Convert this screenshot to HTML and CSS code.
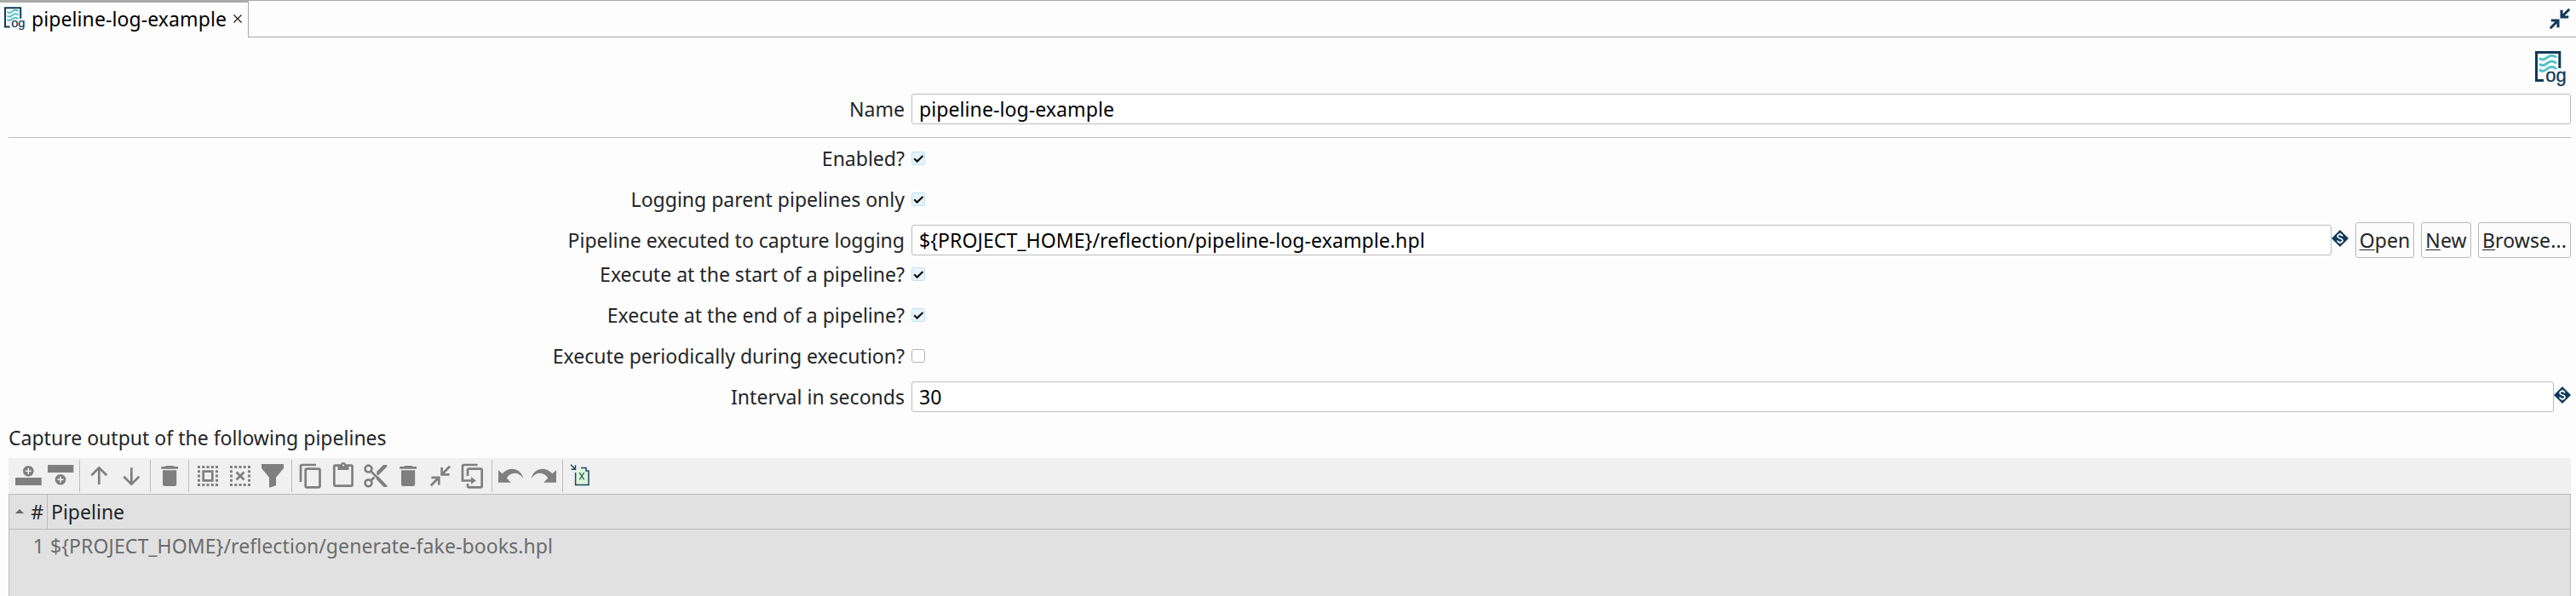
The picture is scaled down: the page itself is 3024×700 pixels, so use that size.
FILE: index.html
```html
<!DOCTYPE html>
<html lang="en">
<head>
<meta charset="utf-8">
<title>pipeline-log-example</title>
<link rel="stylesheet" href="styles.css">
</head>
<body>
<svg class="defs" width="0" height="0">
  <symbol id="log" viewBox="0 0 36 41" overflow="visible">
    <path d="M10 34.600H1.500V1.400H28.800V20" fill="none" stroke="#0e3a5a" stroke-width="3"/>
    <g fill="none" stroke="#4fc3c7" stroke-width="2.900">
      <path d="M5 8.200c3 3 6 2 9-.6s7-3.600 11-.2"/>
      <path d="M5 15c3 3 6 2 9-.6s7-3.600 11-.2"/>
      <path d="M5 21.600c3 3 6 2 9-.6s7-3.600 11-.2"/>
    </g>
    <text x="12.200" y="35.800" class="log-text">og</text>
  </symbol>
  <symbol id="shrink" viewBox="0 0 24 24">
    <path d="M23.200.8L14.500 9.500M14 1.800V10H22.200M.8 23.200L9.500 14.500M1.800 14H10V22.200" fill="none" stroke="currentColor" stroke-width="3"/>
  </symbol>
  <symbol id="var" viewBox="0 0 20 20">
    <path d="M10 0L20 10L10 20L0 10Z" fill="#0e3a5a"/>
    <path d="M12.900 7.500C12.500 6 11.500 5.400 10 5.400C8.200 5.400 7.100 6.200 7.100 7.500C7.100 10.600 13 9.200 13 12.400C13 13.800 11.900 14.600 10 14.600C8.300 14.600 7.200 13.900 6.900 12.400M10 3.800V5.400M10 14.600V16.200" fill="none" stroke="#fff" stroke-width="1.600"/>
  </symbol>
  <symbol id="trash" viewBox="0 0 38 42">
    <path d="M9.300 10H14L15 8.900H23.500L24.500 10H29V12.700H9.300ZM11 14.200H27.200V30.500Q27.200 33 24.700 33H13.500Q11 33 11 30.500Z"/>
  </symbol>
  <symbol id="dots" viewBox="0 0 38 42">
    <path d="M7 10.500H31M7 31.500H31" stroke="currentColor" stroke-width="3" stroke-dasharray="3 2.250" fill="none"/>
    <path d="M8.500 14.250V30M29.500 14.250V30" stroke="currentColor" stroke-width="3" stroke-dasharray="3 2.250" fill="none"/>
  </symbol>
  <symbol id="undo" viewBox="0 0 38 42">
    <path d="M4 14.300L8.600 18.300C16 9.800 30 10.500 33.300 24C27.500 15 18 16.500 13.800 23.500L18.800 28.700H4Z"/>
  </symbol>
</svg>

<header class="tabs">
  <div class="tab">
    <svg class="tab-icon"><use href="#log"/></svg>
    <span class="tab-title">pipeline-log-example</span>
    <svg class="close" viewBox="0 0 10 10"><path d="M.5.5L9.500 9.500M9.500.5L.5 9.500"/></svg>
  </div>
  <div class="tab-rest"><svg class="minimize"><use href="#shrink"/></svg></div>
</header>

<main class="editor">
  <div class="logo-row"><svg class="logo"><use href="#log"/></svg></div>
  <div class="row name-row"><label>Name</label><div class="input">pipeline-log-example</div></div>
  <div class="row"><label>Enabled?</label><span class="check on"><svg viewBox="0 0 16 16"><path d="M3.200 8.200L6.600 11.600L13.400 5"/></svg></span></div>
  <div class="row"><label>Logging parent pipelines only</label><span class="check on"><svg viewBox="0 0 16 16"><path d="M3.200 8.200L6.600 11.600L13.400 5"/></svg></span></div>
  <div class="row">
    <label>Pipeline executed to capture logging</label>
    <div class="input">${PROJECT_HOME}/reflection/pipeline-log-example.hpl</div>
    <svg class="var"><use href="#var"/></svg>
    <div class="buttons">
      <div class="button open"><span><u>O</u>pen</span></div>
      <div class="button new"><span><u>N</u>ew</span></div>
      <div class="button browse"><span><u>B</u>rowse...</span></div>
    </div>
  </div>
  <div class="row tight"><label>Execute at the start of a pipeline?</label><span class="check on"><svg viewBox="0 0 16 16"><path d="M3.200 8.200L6.600 11.600L13.400 5"/></svg></span></div>
  <div class="row"><label>Execute at the end of a pipeline?</label><span class="check on"><svg viewBox="0 0 16 16"><path d="M3.200 8.200L6.600 11.600L13.400 5"/></svg></span></div>
  <div class="row"><label>Execute periodically during execution?</label><span class="check"></span></div>
  <div class="row"><label>Interval in seconds</label><div class="input">30</div><svg class="var"><use href="#var"/></svg></div>
  <div class="caption">Capture output of the following pipelines</div>

  <div class="toolbar">
    <svg class="tool" viewBox="0 0 38 42"><path d="M4 23H34.700V32H4Z"/><circle cx="19.300" cy="15.300" r="6.300"/><path class="plus" d="M19.300 11.800V18.800M15.800 15.300H22.800"/></svg>
    <svg class="tool" viewBox="0 0 38 42"><path d="M4 8H34.300V17H4Z"/><circle cx="19" cy="25.200" r="6.300"/><path class="plus" d="M19 21.700V28.700M15.500 25.200H22.500"/></svg>
    <i class="sep"></i>
    <svg class="tool line" viewBox="0 0 38 42"><path d="M19.300 31V11M10.300 20.300L19.300 11.300L28.300 20.300"/></svg>
    <svg class="tool line" viewBox="0 0 38 42"><path d="M19.300 11.300V31M10.300 21.700L19.300 30.700L28.300 21.700"/></svg>
    <i class="sep"></i>
    <svg class="tool"><use href="#trash"/></svg>
    <i class="sep"></i>
    <svg class="tool line" viewBox="0 0 38 42"><use href="#dots" width="38" height="42"/><path d="M13.700 15.700H24.300V26.300H13.700Z"/></svg>
    <svg class="tool line" viewBox="0 0 38 42"><use href="#dots" width="38" height="42"/><path d="M14.500 16.500L23.500 25.500M23.500 16.500L14.500 25.500"/></svg>
    <svg class="tool" viewBox="0 0 38 42"><path d="M6 7H32V12L23 22.700V32.300L15 34.700V22.700L6 12Z"/></svg>
    <i class="sep"></i>
    <svg class="tool line" viewBox="0 0 38 42"><path d="M25 8H8.500Q7 8 7 9.500V28"/><rect x="12.700" y="12.700" width="16.800" height="21.600" rx="1.500"/></svg>
    <svg class="tool line" viewBox="0 0 38 42"><rect x="8.300" y="8.600" width="21.300" height="24" rx="1.500"/><path class="fill" d="M12.500 8H16A3 3 0 0 1 22 8H25.500V14H12.500Z"/><circle class="hole" cx="19" cy="8.500" r="1.100"/></svg>
    <svg class="tool line" viewBox="0 0 38 42"><circle cx="10.500" cy="12.600" r="3.900"/><circle cx="10.500" cy="29.300" r="3.900"/><path d="M13.300 15.400L31.500 33.200M13.300 26.500L17.500 22.500M20.800 19.500L31.500 9"/><path class="fill" d="M28 7.900H33L22 19L19.800 16.600ZM19.500 24.500L22.500 22L33 34H28.500Z"/></svg>
    <svg class="tool"><use href="#trash"/></svg>
    <svg class="tool line" viewBox="0 0 38 42"><path d="M30 9.800L21.500 18.500M20.600 11V19.400H29.700M7.800 32.200L16.500 23.500M8.500 22.900H17.300V31.600"/></svg>
    <svg class="tool line" viewBox="0 0 38 42"><path d="M24.500 8H8.500Q7 8 7 9.500V26.500H18M13 21V14.200Q13 12.700 14.500 12.700H28.200Q29.700 12.700 29.700 14.200V32.800Q29.700 34.300 28.200 34.300H14.500Q13 34.300 13 32.800V30"/><path class="fill" d="M17 22L22.800 26.400L17 30.800Z"/></svg>
    <i class="sep"></i>
    <svg class="tool"><use href="#undo"/></svg>
    <svg class="tool flip"><use href="#undo"/></svg>
    <i class="sep"></i>
    <svg class="tool excel" viewBox="0 0 38 42"><path class="page" d="M11.600 15.500V31.400H27V15L23.500 11.500H16.500L13.500 14"/><path class="edge" d="M11.600 17V31.400H27V15H24V11.500H18M6 7.700L11 12.700M11.500 8.300V13.200H6.600"/><path class="mark" d="M16.300 17L21.700 25.500M21.700 17L16.300 25.500"/></svg>
  </div>

  <div class="table">
    <div class="thead"><div class="num"><svg class="sort" viewBox="0 0 10 5"><path d="M0 5L5 0L10 5Z"/></svg><span>#</span></div><div class="cell">Pipeline</div></div>
    <div class="trow"><div class="num">1</div><div class="cell">${PROJECT_HOME}/reflection/generate-fake-books.hpl</div></div>
  </div>
</main>
</body>
</html>
```
FILE: styles.css
```css
* { box-sizing: border-box; }
body {
  margin: 0;
  height: 700px;
  overflow: hidden;
  display: flex;
  flex-direction: column;
  background: #fdfdfd;
  color: #232629;
  font-family: "Noto Sans", sans-serif;
  font-size: 23px;
  letter-spacing: .01px;
  line-height: 32px;
  white-space: nowrap;
}
svg { display: block; flex: none; }
.defs { position: absolute; }
.log-text { font: 22px "Liberation Sans", Arial, sans-serif; letter-spacing: 0; fill: #0e3a5a; stroke: #0e3a5a; stroke-width: .3px; }

.tabs { display: flex; height: 44px; flex: none; }
.tab {
  width: 292px;
  display: flex;
  align-items: flex-start;
  padding-left: 5px;
  border-top: 3px solid #a9a9a9;
  border-right: 1px solid #a9a9a9;
  color: #000;
}
.tab-icon { width: 24px; height: 28px; margin-top: 5px; overflow: visible; }
.tab-title { margin: 3px 0 0 8px; width: 229px; letter-spacing: .09px; }
.close { width: 10px; height: 10px; margin: 14px 0 0 8px; stroke: #1a1a1a; stroke-width: 1.2; fill: none; }
.tab-rest {
  flex: 1;
  display: flex;
  justify-content: flex-end;
  padding: 9px 7px 0 0;
  border-top: 1px solid #a9a9a9;
  border-bottom: 1px solid #a9a9a9;
}
.minimize { width: 24px; height: 24px; color: #0e3a5a; }

.editor { flex: 1; display: flex; flex-direction: column; padding: 0 6px 0 10px; min-height: 0; }
.logo-row { height: 66px; flex: none; display: flex; justify-content: flex-end; padding: 16px 6px 0 0; }
.logo { width: 36px; height: 41px; overflow: visible; }
.row { display: flex; align-items: center; height: 48px; flex: none; }
.row label { width: 1052px; margin-right: 8px; text-align: right; flex: none; }
.name-row { height: 52px; padding-bottom: 15px; border-bottom: 1px solid #bcbcbc; }
.row.tight { height: 32px; margin-bottom: 8px; }
.input {
  flex: 1;
  height: 36px;
  padding: 1px 8px;
  border: 1px solid #bcbcbc;
  border-radius: 3px;
  background: #fff;
  color: #000;
  letter-spacing: .09px;
}
.check { width: 16px; height: 16px; border: 1px solid #b4b4b4; border-radius: 3px; background: #fff; }
.check.on { border-color: #bfdff3; background: #e8f4fb; }
.check svg { width: 16px; height: 16px; margin: -1px; fill: none; stroke: #111; stroke-width: 2.2; }
.var { width: 20px; height: 20px; margin-bottom: 4px; }
.buttons { display: flex; gap: 8px; margin-left: 8px; }
.button {
  height: 42px;
  display: flex;
  align-items: center;
  justify-content: center;
  border: 1px solid #b9b9b9;
  border-radius: 3px;
  background: #fcfcfc;
  letter-spacing: .1px;
}
.button u { text-decoration-thickness: 1px; text-underline-offset: 2px; }
.open { width: 69px; }
.new { width: 59px; }
.browse { width: 109px; }
.caption { height: 48px; line-height: 48px; flex: none; }

.toolbar { display: flex; height: 42px; flex: none; padding-left: 4px; background: #f0f0f0; }
.tool { width: 38px; height: 42px; fill: #7f7f7f; color: #7f7f7f; }
.tool .plus { stroke: #f0f0f0; stroke-width: 1.6; fill: none; }
.line { fill: none; stroke: #7f7f7f; stroke-width: 2.7; }
.line use { stroke: none; }
.line .fill { fill: #7f7f7f; stroke: none; }
.line .hole { fill: #f0f0f0; stroke: none; }
.flip { transform: scaleX(-1); }
.excel .page { fill: #dcf5dc; }
.excel .edge { fill: none; stroke: #1d4564; stroke-width: 1.5; }
.excel .mark { fill: none; stroke: #1d5a54; stroke-width: 1.3; }
.sep { width: 1px; height: 38px; margin: 2px 3px 0; background: #bcbcbc; }

.table { flex: 1; background: #e1e1e1; border: 1px solid #bcbcbc; border-bottom: 0; }
.thead { display: flex; height: 41px; border-bottom: 1px solid #bcbcbc; line-height: 40px; }
.num { width: 45px; padding-right: 4px; display: flex; justify-content: flex-end; align-items: center; }
.thead .num { border-right: 1px solid #bcbcbc; justify-content: space-between; padding: 0 4px 0 7px; }
.sort { width: 10px; height: 5px; margin-bottom: 1px; fill: #666; }
.cell { padding-left: 4px; }
.trow { display: flex; height: 38px; line-height: 38px; color: #6a6b6c; }
.trow .cell { padding-left: 3px; letter-spacing: .09px; }
```
